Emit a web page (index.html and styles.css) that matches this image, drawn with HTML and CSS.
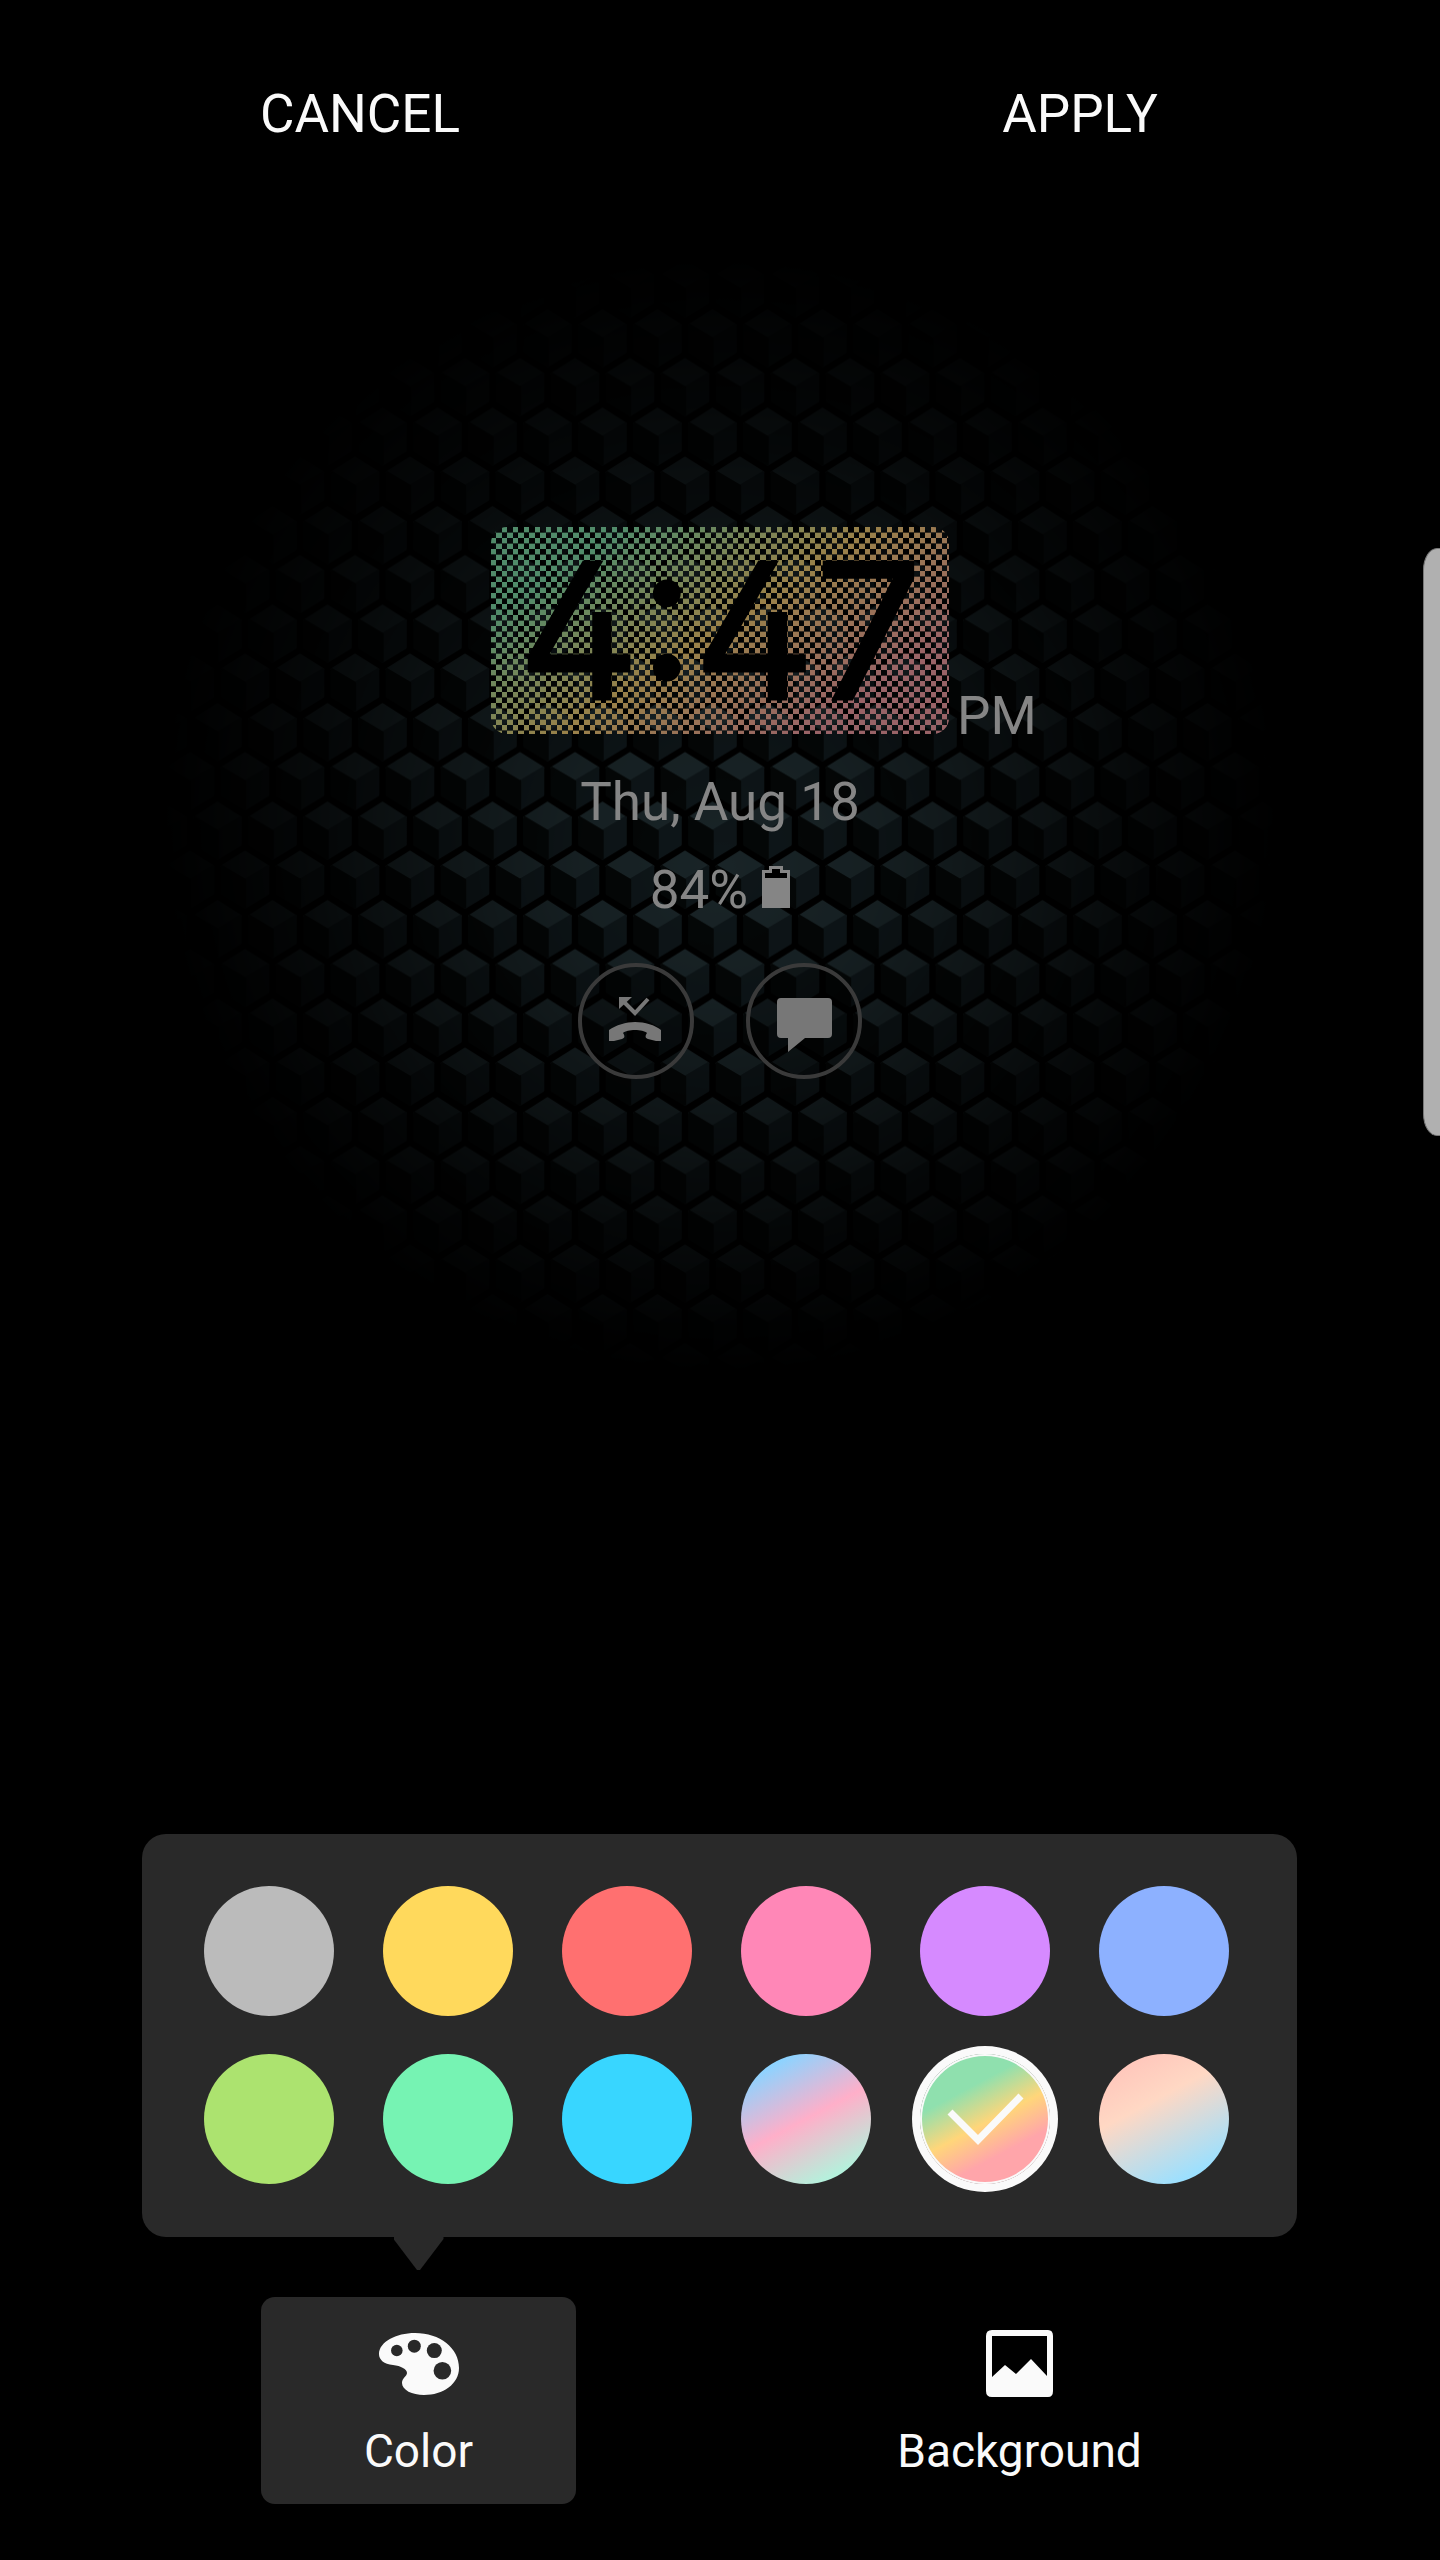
FILE: index.html
```html
<!DOCTYPE html>
<html lang="en">
<head>
    <meta charset="UTF-8">
    <meta name="viewport" content="width=device-width, initial-scale=1.0">
    <title>Always On Display - Clock Color</title>
    <link rel="stylesheet" href="styles.css">
</head>
<body>
    <header class="top-bar">
        <button type="button">CANCEL</button>
        <button type="button">APPLY</button>
    </header>

    <main class="preview">
        <!-- Cube wallpaper, faded out towards the edges -->
        <svg class="wallpaper" viewBox="0 0 1200 1200" aria-hidden="true">
            <defs>
                <pattern id="cubes" width="110" height="197" patternUnits="userSpaceOnUse" patternTransform="translate(-40 68) scale(0.5)">
                    <g id="cube" stroke-width="5" stroke-linejoin="round">
                        <path d="M55 45 L101 74 L55 101 L9 74Z" fill="#192427" stroke="#192427"/>
                        <path d="M55 101 L101 74 V128 L55 156Z" fill="#0e1619" stroke="#0e1619"/>
                        <path d="M55 101 L9 74 V128 L55 156Z" fill="#040707" stroke="#040707"/>
                    </g>
                    <use href="#cube" x="55" y="98"/>
                    <use href="#cube" x="-55" y="98"/>
                    <use href="#cube" x="55" y="-99"/>
                    <use href="#cube" x="-55" y="-99"/>
                </pattern>
                <radialGradient id="fade" cx="600" cy="595" r="560" fx="600" fy="650" gradientUnits="userSpaceOnUse">
                    <stop offset="0" stop-color="#fff"/>
                    <stop offset="0.25" stop-color="#e0e0e0"/>
                    <stop offset="0.5" stop-color="#949494"/>
                    <stop offset="0.75" stop-color="#404040"/>
                    <stop offset="1" stop-color="#000"/>
                </radialGradient>
                <mask id="fadeMask" maskUnits="userSpaceOnUse" x="0" y="0" width="1200" height="1200">
                    <rect width="1200" height="1200" fill="url(#fade)"/>
                </mask>
            </defs>
            <rect width="1200" height="1200" fill="url(#cubes)" mask="url(#fadeMask)"/>
        </svg>

        <div class="clock-row">
            <div class="clock">
                <svg class="clock-bg" viewBox="0 0 458 207" aria-hidden="true">
                    <defs>
                        <linearGradient id="rainbow" x1="41" y1="62" x2="194" y2="290" gradientUnits="userSpaceOnUse">
                            <stop offset="0" stop-color="#518b6a"/>
                            <stop offset="0.5" stop-color="#998149"/>
                            <stop offset="1" stop-color="#996367"/>
                        </linearGradient>
                        <pattern id="checks" width="11" height="11" patternUnits="userSpaceOnUse">
                            <rect width="5" height="5" fill="#fff"/>
                            <rect x="5" y="6" width="6" height="5" fill="#fff"/>
                            <rect y="5" width="11" height="1" fill="#555"/>
                        </pattern>
                        <mask id="checkMask" maskUnits="userSpaceOnUse" x="0" y="0" width="458" height="207">
                            <rect width="458" height="207" rx="16" fill="url(#checks)"/>
                        </mask>
                    </defs>
                    <rect width="458" height="207" fill="url(#rainbow)" mask="url(#checkMask)"/>
                </svg>
                <time class="clock-time" datetime="16:47">4:47</time>
            </div>
            <span class="clock-period">PM</span>
        </div>

        <p class="date">Thu, Aug 18</p>

        <p class="battery">
            84%
            <svg class="battery-icon" viewBox="0 0 28 42" aria-hidden="true">
                <path fill="#858585" d="M0 4H7V0H21V4H28V42H0Z"/>
                <path fill="#000" d="M3 7H10V3H18V7H25V12H3Z"/>
            </svg>
        </p>

        <div class="notifications">
            <svg viewBox="0 0 116 116" role="img" aria-label="Missed call">
                <circle class="ring" cx="58" cy="58" r="56"/>
                <path class="glyph" d="M31 78V67C38 62 48 59 57 59C67 59 77 62 83 67V78H78L70 76C67 75 67 73 69 70C65 66 49 66 45 70C47 73 47 75 44 76L36 78Z"/>
                <path class="glyph" d="M41 34H54L41 46Z"/>
                <path class="glyph-line" d="M45 38L57 50L70 36"/>
            </svg>
            <svg viewBox="0 0 116 116" role="img" aria-label="Message">
                <circle class="ring" cx="58" cy="58" r="56"/>
                <path class="glyph" d="M35 35H82Q86 35 86 39V71Q86 75 82 75H59L42 89V75H35Q31 75 31 71V39Q31 35 35 35Z"/>
            </svg>
        </div>
    </main>

    <fieldset class="palette">
        <label class="swatch gray"><input type="radio" name="color" aria-label="Gray"></label>
        <label class="swatch yellow"><input type="radio" name="color" aria-label="Yellow"></label>
        <label class="swatch red"><input type="radio" name="color" aria-label="Red"></label>
        <label class="swatch pink"><input type="radio" name="color" aria-label="Pink"></label>
        <label class="swatch purple"><input type="radio" name="color" aria-label="Purple"></label>
        <label class="swatch blue"><input type="radio" name="color" aria-label="Blue"></label>
        <label class="swatch lime"><input type="radio" name="color" aria-label="Lime"></label>
        <label class="swatch mint"><input type="radio" name="color" aria-label="Mint"></label>
        <label class="swatch cyan"><input type="radio" name="color" aria-label="Cyan"></label>
        <label class="swatch candy"><input type="radio" name="color" aria-label="Candy gradient"></label>
        <label class="swatch rainbow">
            <input type="radio" name="color" aria-label="Rainbow gradient" checked>
            <svg class="check" viewBox="0 0 130 130" aria-hidden="true">
                <path d="M30 58L58 86L101 42" fill="none" stroke="#fafafa" stroke-width="7"/>
            </svg>
        </label>
        <label class="swatch sunset"><input type="radio" name="color" aria-label="Sunset gradient"></label>
    </fieldset>

    <nav class="tabs">
        <button type="button" class="tab active">
            <svg viewBox="0 0 80 68" width="80" height="68" aria-hidden="true">
                <path fill="#fafafa" fill-rule="evenodd" transform="translate(0 3)" d="M36 0C61 0 80 15 80 35C80 51 64 62 45 62C33 62 23 57 23 50C23 45 28 43 28 40C28 36 22 33 14 32C5 31 0 27 0 21C0 9 17 0 36 0Z"/>
                <g fill="#292929">
                    <circle cx="17.8" cy="20.5" r="5.8"/>
                    <circle cx="35.3" cy="16.2" r="6.5"/>
                    <circle cx="55.3" cy="20.6" r="7.5"/>
                    <circle cx="63.4" cy="40.8" r="8.8"/>
                </g>
            </svg>
            Color
        </button>
        <button type="button" class="tab">
            <svg viewBox="0 0 68 68" width="68" height="68" aria-hidden="true">
                <path fill="#fafafa" fill-rule="evenodd" d="M6 0H62Q67 0 67 6V61Q67 67 62 67H6Q0 67 0 61V6Q0 0 6 0ZM6 6V47L19 35L30 44L45 29L61 46V6Z"/>
            </svg>
            Background
        </button>
    </nav>

    <div class="edge-handle"></div>
</body>
</html>
```

FILE: styles.css
```css
* {
    box-sizing: border-box;
}
body {
    font-family: Roboto, sans-serif;
    margin: 0;
    background: #000;
    color: #fafafa;
    min-height: 100vh;
    display: flex;
    flex-direction: column;
    position: relative;
    overflow-x: hidden;
}
button {
    font-family: inherit;
    color: inherit;
    background: none;
    border: none;
    padding: 0;
    cursor: pointer;
}

/* Top bar */
.top-bar {
    display: flex;
    height: 226px;
}
.top-bar button {
    flex: 1;
    padding-top: 2px;
    font-size: 53px;
}

/* Clock preview */
.preview {
    position: relative;
    flex: 1;
    padding-top: 301px;
    display: flex;
    flex-direction: column;
    align-items: center;
    font-size: 53px;
    line-height: 62px;
    color: #858585;
}
.preview p {
    margin: 0;
}
.wallpaper {
    position: absolute;
    top: -6px;
    left: 50%;
    width: 1200px;
    margin-left: -600px;
}
.clock-row {
    position: relative;
    width: 100%;
    display: grid;
    grid-template-columns: 1fr auto 1fr;
    align-items: end;
}
.clock {
    grid-column: 2;
    position: relative;
    width: 458px;
    height: 207px;
    display: flex;
    justify-content: center;
    align-items: center;
}
.clock-bg {
    position: absolute;
    inset: 0;
}
.clock-time {
    position: relative;
    font-family: Inter, Roboto, sans-serif;
    font-feature-settings: "cv02", "ss01";
    font-size: 188px;
    line-height: 207px;
    color: #000;
    -webkit-text-stroke: 3px #000;
    stroke-linejoin: round;
}
.clock-period {
    padding-left: 8px;
    line-height: 36px;
}
.date {
    position: relative;
    padding-top: 37px;
}
.battery {
    position: relative;
    padding-top: 26px;
    display: flex;
    align-items: baseline;
    gap: 14px;
}
.battery-icon {
    width: 28px;
    height: 42px;
}
.notifications {
    position: relative;
    display: flex;
    gap: 52px;
    padding-top: 42px;
}
.notifications svg {
    width: 116px;
    height: 116px;
}
.ring {
    fill: rgba(0, 0, 0, 0.3);
    stroke: #3a3a3a;
    stroke-width: 4;
}
.glyph {
    fill: #777;
}
.glyph-line {
    fill: none;
    stroke: #777;
    stroke-width: 4;
}

/* Color palette */
.palette {
    margin: 0 143px 0 142px;
    padding: 52px 68px 53px 62px;
    border: none;
    border-radius: 24px;
    background: #292929;
    display: grid;
    grid-template-columns: repeat(6, 130px);
    justify-content: space-between;
    row-gap: 38px;
}
.swatch {
    position: relative;
    display: block;
    width: 130px;
    height: 130px;
    border-radius: 50%;
    cursor: pointer;
}
.swatch input {
    appearance: none;
    display: block;
    width: 100%;
    height: 100%;
    margin: 0;
    border-radius: 50%;
}
.swatch input:checked {
    box-shadow: 0 0 0 8px #fafafa, inset 0 0 0 2px #fafafa;
}
.check {
    position: absolute;
    inset: 0;
}
.gray { background: #bbb; }
.yellow { background: #ffd95c; }
.red { background: #ff7070; }
.pink { background: #ff87b7; }
.purple { background: #d68aff; }
.blue { background: #8db1ff; }
.lime { background: #ace36f; }
.mint { background: #76f3b3; }
.cyan { background: #38d6ff; }
.candy { background: linear-gradient(152deg, #8dd3ff 14%, #ffafc9 50%, #b4f1dc 86%); }
.rainbow { background: linear-gradient(152deg, #8fe0ae 30%, #ffd67a 52%, #ffa5aa 72%); }
.sunset { background: linear-gradient(152deg, #ffc8bc 14%, #ffd8c4 38%, #9be0ff 86%); }

/* Bottom tabs */
.tabs {
    display: flex;
    padding: 60px 120px 56px 118px;
}
.tab {
    position: relative;
    flex: 1;
    margin: 0 143px;
    height: 207px;
    padding-top: 33px;
    display: flex;
    flex-direction: column;
    align-items: center;
    gap: 26px;
    border-radius: 14px;
    font-size: 46px;
    line-height: 54px;
}
.tab.active {
    background: #292929;
}
.tab.active::before {
    content: "";
    position: absolute;
    top: -60px;
    left: 50%;
    width: 50px;
    height: 33px;
    margin-left: -25px;
    background: #292929;
    clip-path: polygon(0 0, 100% 0, 100% 6%, 53% 100%, 47% 100%, 0 6%);
}

.edge-handle {
    position: absolute;
    top: 548px;
    right: 0;
    width: 17px;
    height: 588px;
    background: #b0b0b0;
    border: 1px solid #777;
    border-right: none;
    border-radius: 14px 0 0 14px / 22px 0 0 22px;
}
```
